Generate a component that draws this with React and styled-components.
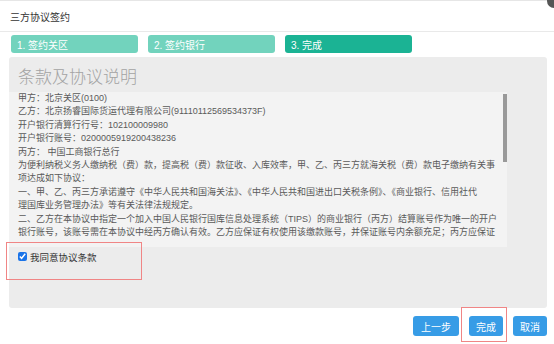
import styled, { createGlobalStyle } from "styled-components";

const GlobalStyle = createGlobalStyle`
  html, body {
    margin: 0;
    padding: 0;
    background: #fff;
  }
  body {
    font-family: "Liberation Sans", "Noto Sans CJK SC", sans-serif;
  }
`;

const Dialog = styled.div`
  position: relative;
  width: 554px;
  height: 344px;
  overflow: hidden;
  background: #fff;
`;

const TitleBar = styled.div`
  height: 30px;
  display: flex;
  align-items: center;
  padding-left: 10px;
  border-top: 1px solid #e6e6e6;
  border-bottom: 1px solid #e9e9e9;
  font-size: 10px;
  color: #333;
`;

const CloseDot = styled.div`
  position: absolute;
  top: -6px;
  right: -7px;
  width: 14px;
  height: 14px;
  border-radius: 50%;
  background: #555;
`;

const Steps = styled.div`
  display: flex;
  gap: 10px;
  padding: 3px 0 0 11px;
`;

const Step = styled.div`
  width: 127px;
  height: 18px;
  box-sizing: border-box;
  padding-left: 6px;
  display: flex;
  align-items: center;
  border-radius: 3px;
  font-size: 10px;
  color: #fff;
  background: ${(props) => (props.active ? "#1bb394" : "#72d3bd")};
`;

const Panel = styled.div`
  margin: 4px 7px 0 9px;
  height: 251px;
  box-sizing: border-box;
  padding-top: 11px;
  border-radius: 3px;
  background: #ececec;
`;

const Heading = styled.div`
  padding-left: 9px;
  height: 20px;
  line-height: 20px;
  margin-bottom: 4px;
  font-size: 17px;
  font-weight: 300;
  color: #a3a3a3;
`;

const ScrollArea = styled.div`
  position: relative;
  height: 155px;
  margin-right: 40px;
  padding-left: 9px;
  overflow: hidden;
  background: #f3f3f3;
`;

const Line = styled.div`
  height: 13.4px;
  line-height: 13.4px;
  font-size: 9px;
  color: #5a5a5a;
  white-space: nowrap;
`;

const Thumb = styled.div`
  position: absolute;
  top: 2px;
  right: 0;
  width: 4px;
  height: 68px;
  background: #999;
`;

const AgreeRow = styled.label`
  display: flex;
  align-items: center;
  gap: 3px;
  height: 13px;
  margin-top: 3px;
  padding-left: 9px;
  font-size: 9.5px;
  color: #333;
`;

const Check = styled.input`
  width: 9px;
  height: 9px;
  margin: 0;
  accent-color: #1a73e8;
`;

const Footer = styled.div`
  display: flex;
  justify-content: flex-end;
  gap: 10px;
  margin-top: 8px;
  padding-right: 7px;
`;

const Button = styled.button`
  height: 20px;
  padding: 0 ${(props) => (props.wide ? "8px" : "7px")};
  border: none;
  border-radius: 3px;
  background: #379ce6;
  color: #fff;
  font-family: inherit;
  font-size: 10px;
`;

const Mark = styled.div`
  position: absolute;
  border: 1.5px solid #f08585;
  box-sizing: border-box;
`;

const lines = [
  "甲方：北京关区(0100)",
  "乙方：北京扬睿国际货运代理有限公司(91110112569534373F)",
  "开户银行清算行行号：102100009980",
  "开户银行账号：0200005919200438236",
  "丙方： 中国工商银行总行",
  "为便利纳税义务人缴纳税（费）款，提高税（费）款征收、入库效率，甲、乙、丙三方就海关税（费）款电子缴纳有关事",
  "项达成如下协议：",
  "一、甲、乙、丙三方承诺遵守《中华人民共和国海关法》、《中华人民共和国进出口关税条例》、《商业银行、信用社代",
  "理国库业务管理办法》等有关法律法规规定。",
  "二、乙方在本协议中指定一个加入中国人民银行国库信息处理系统（TIPS）的商业银行（丙方）结算账号作为唯一的开户",
  "银行账号，该账号需在本协议中经丙方确认有效。乙方应保证有权使用该缴款账号，并保证账号内余额充足；丙方应保证",
];

export default function App() {
  return (
    <Dialog>
      <GlobalStyle />
      <TitleBar>三方协议签约</TitleBar>
      <CloseDot />
      <Steps>
        <Step>1. 签约关区</Step>
        <Step>2. 签约银行</Step>
        <Step active>3. 完成</Step>
      </Steps>
      <Panel>
        <Heading>条款及协议说明</Heading>
        <ScrollArea>
          {lines.map((text) => (
            <Line key={text}>{text}</Line>
          ))}
          <Thumb />
        </ScrollArea>
        <AgreeRow>
          <Check type="checkbox" defaultChecked />
          我同意协议条款
        </AgreeRow>
      </Panel>
      <Footer>
        <Button wide>上一步</Button>
        <Button>完成</Button>
        <Button>取消</Button>
      </Footer>
      <Mark style={{ left: 6, top: 242, width: 136, height: 38 }} />
      <Mark style={{ left: 461, top: 307, width: 46, height: 35 }} />
    </Dialog>
  );
}
